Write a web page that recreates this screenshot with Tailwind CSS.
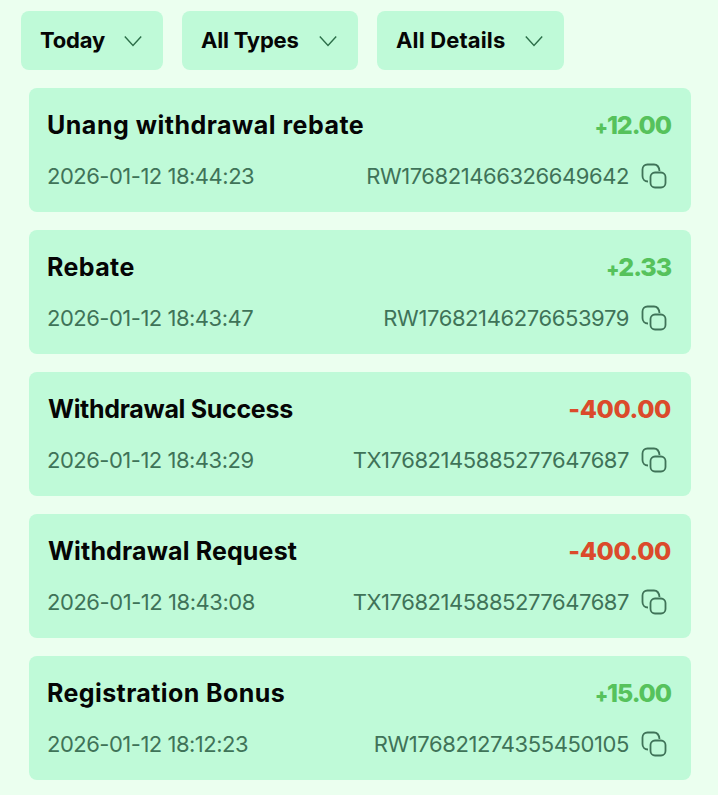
<!DOCTYPE html>
<html><head><meta charset="utf-8"><script src="https://cdn.jsdelivr.net/npm/@tailwindcss/browser@4"></script></head>
<body class="m-0 h-[795px] overflow-hidden bg-[#ebffef] font-['Inter',sans-serif]">
<div class="flex gap-[19px] pl-[21px] pt-[11px]">
  <div class="flex h-[59px] w-[142px] items-center justify-between rounded-lg bg-[#bffad8] pl-[19px] pr-[21px]"><span class="text-[22px] font-bold tracking-[-0.2px] text-[#050505]">Today</span><svg class="h-[18px] w-[18px]" viewBox="0 0 18 18" fill="none" stroke="#2c6e49" stroke-width="1.400"><path d="M.800 4.500 9 13.500l8.200-9"/></svg></div>
  <div class="flex h-[59px] w-[176px] items-center justify-between rounded-lg bg-[#bffad8] pl-[19px] pr-[21px]"><span class="text-[22px] font-bold tracking-[-0.2px] text-[#050505]">All Types</span><svg class="h-[18px] w-[18px]" viewBox="0 0 18 18" fill="none" stroke="#2c6e49" stroke-width="1.400"><path d="M.800 4.500 9 13.500l8.200-9"/></svg></div>
  <div class="flex h-[59px] w-[187px] items-center justify-between rounded-lg bg-[#bffad8] pl-[19px] pr-[21px]"><span class="text-[22px] font-bold tracking-[0.15px] text-[#050505]">All Details</span><svg class="h-[18px] w-[18px]" viewBox="0 0 18 18" fill="none" stroke="#2c6e49" stroke-width="1.400"><path d="M.800 4.500 9 13.500l8.200-9"/></svg></div>
</div>
<div class="ml-[29px] mr-[27px] mt-[18px] flex flex-col gap-[18px]">
  <div class="flex h-[124px] flex-col justify-between rounded-lg bg-[#bffad8] pb-[19px] pl-[18px] pr-[20px] pt-[20px]">
    <div class="flex items-center justify-between"><span class="text-[25px] font-bold leading-[34px] tracking-[0.5px] text-[#050505]">Unang withdrawal rebate</span><span class="text-[25px] font-extrabold leading-[34px] tracking-[-1.1px] text-[#56c25c]"><span class="text-[19px] font-black leading-none">+</span>12.00</span></div>
    <div class="flex items-center justify-between text-[22px] leading-[34px] text-[#3f7358]"><span class="tracking-[-0.5px]">2026-01-12 18:44:23</span><div class="flex items-center gap-[12px]"><span class="tracking-[-0.43px]">RW176821466326649642</span><svg class="mr-[4px] h-[26px] w-[26px]" viewBox="0 0 26 26" fill="none" stroke="#3f7358" stroke-width="1.800"><path d="M7 18.500C3.500 18.500 1.500 16 1.500 13V6.500C1.500 3.500 3.500 1.500 6.500 1.500h6.500c3 0 5 2 5.500 6.500"/><rect x="9.500" y="9.500" width="15" height="15" rx="4.500"/></svg></div></div>
  </div>
  <div class="flex h-[124px] flex-col justify-between rounded-lg bg-[#bffad8] pb-[19px] pl-[18px] pr-[20px] pt-[20px]">
    <div class="flex items-center justify-between"><span class="text-[25px] font-bold leading-[34px] tracking-[0.4px] text-[#050505]">Rebate</span><span class="text-[25px] font-extrabold leading-[34px] tracking-[-1.1px] text-[#56c25c]"><span class="text-[19px] font-black leading-none">+</span>2.33</span></div>
    <div class="flex items-center justify-between text-[22px] leading-[34px] text-[#3f7358]"><span class="tracking-[-0.5px]">2026-01-12 18:43:47</span><div class="flex items-center gap-[12px]"><span class="tracking-[-0.4px]">RW17682146276653979</span><svg class="mr-[4px] h-[26px] w-[26px]" viewBox="0 0 26 26" fill="none" stroke="#3f7358" stroke-width="1.800"><path d="M7 18.500C3.500 18.500 1.500 16 1.500 13V6.500C1.500 3.500 3.500 1.500 6.500 1.500h6.500c3 0 5 2 5.500 6.500"/><rect x="9.500" y="9.500" width="15" height="15" rx="4.500"/></svg></div></div>
  </div>
  <div class="flex h-[124px] flex-col justify-between rounded-lg bg-[#bffad8] pb-[19px] pl-[18px] pr-[20px] pt-[20px]">
    <div class="flex items-center justify-between"><span class="ml-px text-[25px] font-bold leading-[34px] tracking-[-0.3px] text-[#050505]">Withdrawal Success</span><span class="text-[25px] font-extrabold leading-[34px] tracking-[-0.4px] text-[#db4a2b]">-400.00</span></div>
    <div class="flex items-center justify-between text-[22px] leading-[34px] text-[#3f7358]"><span class="tracking-[-0.5px]">2026-01-12 18:43:29</span><div class="flex items-center gap-[12px]"><span class="tracking-[-0.45px]">TX17682145885277647687</span><svg class="mr-[4px] h-[26px] w-[26px]" viewBox="0 0 26 26" fill="none" stroke="#3f7358" stroke-width="1.800"><path d="M7 18.500C3.500 18.500 1.500 16 1.500 13V6.500C1.500 3.500 3.500 1.500 6.500 1.500h6.500c3 0 5 2 5.500 6.500"/><rect x="9.500" y="9.500" width="15" height="15" rx="4.500"/></svg></div></div>
  </div>
  <div class="flex h-[124px] flex-col justify-between rounded-lg bg-[#bffad8] pb-[19px] pl-[18px] pr-[20px] pt-[20px]">
    <div class="flex items-center justify-between"><span class="ml-px text-[25px] font-bold leading-[34px] tracking-[0.15px] text-[#050505]">Withdrawal Request</span><span class="text-[25px] font-extrabold leading-[34px] tracking-[-0.4px] text-[#db4a2b]">-400.00</span></div>
    <div class="flex items-center justify-between text-[22px] leading-[34px] text-[#3f7358]"><span class="tracking-[-0.45px]">2026-01-12 18:43:08</span><div class="flex items-center gap-[12px]"><span class="tracking-[-0.45px]">TX17682145885277647687</span><svg class="mr-[4px] h-[26px] w-[26px]" viewBox="0 0 26 26" fill="none" stroke="#3f7358" stroke-width="1.800"><path d="M7 18.500C3.500 18.500 1.500 16 1.500 13V6.500C1.500 3.500 3.500 1.500 6.500 1.500h6.500c3 0 5 2 5.500 6.500"/><rect x="9.500" y="9.500" width="15" height="15" rx="4.500"/></svg></div></div>
  </div>
  <div class="flex h-[124px] flex-col justify-between rounded-lg bg-[#bffad8] pb-[19px] pl-[18px] pr-[20px] pt-[20px]">
    <div class="flex items-center justify-between"><span class="text-[25px] font-bold leading-[34px] tracking-[0.4px] text-[#050505]">Registration Bonus</span><span class="text-[25px] font-extrabold leading-[34px] tracking-[-1.1px] text-[#56c25c]"><span class="text-[19px] font-black leading-none">+</span>15.00</span></div>
    <div class="flex items-center justify-between text-[22px] leading-[34px] text-[#3f7358]"><span class="tracking-[-0.5px]">2026-01-12 18:12:23</span><div class="flex items-center gap-[12px]"><span class="tracking-[-0.4px]">RW176821274355450105</span><svg class="mr-[4px] h-[26px] w-[26px]" viewBox="0 0 26 26" fill="none" stroke="#3f7358" stroke-width="1.800"><path d="M7 18.500C3.500 18.500 1.500 16 1.500 13V6.500C1.500 3.500 3.500 1.500 6.500 1.500h6.500c3 0 5 2 5.500 6.500"/><rect x="9.500" y="9.500" width="15" height="15" rx="4.500"/></svg></div></div>
  </div>
</div>
</body></html>
